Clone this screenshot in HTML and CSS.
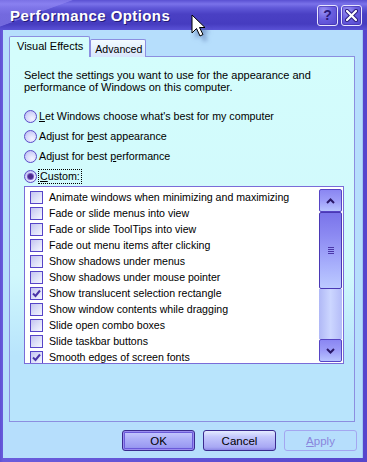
FILE: index.html
```html
<!DOCTYPE html>
<html lang="en">
<head>
    <meta charset="UTF-8">
    <title>Performance Options</title>
    <link rel="stylesheet" href="styles.css">
</head>
<body>
    <div class="window">
        <div class="titlebar">
            <span class="title">Performance Options</span>
            <div class="caption-btns">
                <span class="cap-btn help">?</span>
                <span class="cap-btn close">
                    <svg width="13" height="13" viewBox="0 0 13 13">
                        <path d="M2 2 L11 11 M11 2 L2 11" stroke="#2a1c7c" stroke-width="4.2" stroke-linecap="round"/>
                        <path d="M2 2 L11 11 M11 2 L2 11" stroke="#fff" stroke-width="2.2" stroke-linecap="round"/>
                    </svg>
                </span>
            </div>
        </div>

        <div class="frame">
            <div class="tabs">
                <div class="tab active">Visual Effects</div>
                <div class="tab">Advanced</div>
            </div>

            <div class="panel">
                <p class="intro">Select the settings you want to use for the appearance and<br>performance of Windows on this computer.</p>

                <div class="radios">
                    <div class="radio"><span class="dot"></span><span><u>L</u>et Windows choose what's best for my computer</span></div>
                    <div class="radio"><span class="dot"></span><span>Adjust for <u>b</u>est appearance</span></div>
                    <div class="radio"><span class="dot"></span><span>Adjust for best <u>p</u>erformance</span></div>
                    <div class="radio"><span class="dot on"></span><span class="focus"><u>C</u>ustom:</span></div>
                </div>

                <div class="list">
                    <ul class="items">
                        <li><span class="box"></span>Animate windows when minimizing and maximizing</li>
                        <li><span class="box"></span>Fade or slide menus into view</li>
                        <li><span class="box"></span>Fade or slide ToolTips into view</li>
                        <li><span class="box"></span>Fade out menu items after clicking</li>
                        <li><span class="box"></span>Show shadows under menus</li>
                        <li><span class="box"></span>Show shadows under mouse pointer</li>
                        <li><span class="box checked"><svg width="11" height="11" viewBox="0 0 11 11"><path d="M2 5.5 L4.5 8 L9 2.5" fill="none" stroke="#4a34a8" stroke-width="2"/></svg></span>Show translucent selection rectangle</li>
                        <li><span class="box"></span>Show window contents while dragging</li>
                        <li><span class="box"></span>Slide open combo boxes</li>
                        <li><span class="box"></span>Slide taskbar buttons</li>
                        <li><span class="box checked"><svg width="11" height="11" viewBox="0 0 11 11"><path d="M2 5.5 L4.5 8 L9 2.5" fill="none" stroke="#4a34a8" stroke-width="2"/></svg></span>Smooth edges of screen fonts</li>
                    </ul>
                    <div class="scrollbar">
                        <div class="sb-btn">
                            <svg width="9" height="6" viewBox="0 0 9 6"><path d="M1 5 L4.5 1.5 L8 5" fill="none" stroke="#2a1868" stroke-width="2"/></svg>
                        </div>
                        <div class="thumb">
                            <span class="grip"></span>
                        </div>
                        <div class="track"></div>
                        <div class="sb-btn">
                            <svg width="9" height="6" viewBox="0 0 9 6"><path d="M1 1 L4.5 4.5 L8 1" fill="none" stroke="#2a1868" stroke-width="2"/></svg>
                        </div>
                    </div>
                </div>
            </div>

            <div class="actions">
                <button class="btn default">OK</button>
                <button class="btn">Cancel</button>
                <button class="btn disabled"><u>A</u>pply</button>
            </div>
        </div>

        <!-- mouse pointer over the title bar -->
        <svg class="cursor" width="22" height="28" viewBox="0 0 22 28">
            <path d="M1 1 L1 19 L5.5 14.5 L9 22 L12 20.5 L8.5 13.5 L14 13.5 Z" fill="#fff" stroke="#000" stroke-width="1"/>
        </svg>
    </div>
</body>
</html>
```

FILE: styles.css
```css
/* Global */
body {
    margin: 0;
    font-family: "Liberation Sans", Arial, sans-serif;
    font-size: 11px;
    color: #000;
}

.window {
    position: relative;
    width: 367px;
    height: 462px;
    display: flex;
    flex-direction: column;
    overflow: hidden;
    background: linear-gradient(90deg, #5e50d4 0, #6a5cdc 3px, #5646cc 100%);
}

/* Title bar */
.titlebar {
    flex: none;
    height: 30px;
    display: flex;
    align-items: center;
    justify-content: space-between;
    padding: 0 5px 0 10px;
    background:
        linear-gradient(160deg, rgba(150, 140, 245, 0.55) 0, rgba(150, 140, 245, 0.55) 16%, transparent 16.5%),
        linear-gradient(#5a50d2 0, #7a72ea 4px, #6058d8 8px, #4a40c4 14px, #463cc0 24px, #5a52d6 30px);
}

.title {
    color: #fff;
    font-weight: bold;
    font-size: 15px;
    letter-spacing: 0.4px;
    text-shadow: 1px 1px 0 #241a78;
}

.caption-btns {
    display: flex;
    gap: 3px;
}

.cap-btn {
    width: 19px;
    height: 19px;
    border: 1px solid #e8e6ff;
    border-radius: 3px;
    display: flex;
    align-items: center;
    justify-content: center;
    background: radial-gradient(circle at 30% 25%, #9a92f4 0, #6a5ee0 45%, #5246cc 100%);
    box-shadow: inset 0 0 0 1px rgba(60, 40, 160, 0.5);
}

.cap-btn.help {
    color: #2a1a7a;
    font-weight: bold;
    font-size: 14px;
}

/* Dialog body */
.frame {
    flex: 1;
    margin: 0 4px 4px 3px;
    padding: 6px 8px 0 6px;
    background: #b6defc;
    display: flex;
    flex-direction: column;
    box-shadow: inset -1px 0 0 #a0c8f4;
}

.tabs {
    display: flex;
    align-items: flex-end;
    height: 21px;
    margin-bottom: -1px;
    position: relative;
    z-index: 1;
}

.tab {
    box-sizing: border-box;
    height: 18px;
    padding: 3px 3px 0 4px;
    border: 1px solid #8c8ee0;
    border-bottom: none;
    border-radius: 2px 2px 0 0;
    background: linear-gradient(#f2faff, #d6e6fc);
    font-size: 10.6px;
}

.tab.active {
    height: 21px;
    padding: 3px 6px 0 7px;
    font-size: 11px;
    background: #d4fdfc;
}

.panel {
    height: 366px;
    box-sizing: border-box;
    border: 1px solid #8c8ee0;
    padding: 12px 10px 0 14px;
    background: linear-gradient(#d4fdfc 0, #d0f8fc 60%, #b8e4fc 82%, #b8e4fc 100%);
}

.intro {
    margin: 0;
    line-height: 12px;
    font-size: 11px;
}

/* Radio options */
.radios {
    margin-top: 13px;
}

.radio {
    height: 20px;
    display: flex;
    align-items: center;
    gap: 2px;
    font-size: 10.7px;
}

.dot {
    width: 11px;
    height: 11px;
    border: 1px solid #5a4ac8;
    border-radius: 50%;
    background: radial-gradient(circle at 65% 70%, #f4f4ff 0, #d4d6fa 55%, #b0b0ee 100%);
    display: flex;
    align-items: center;
    justify-content: center;
}

.dot.on::after {
    content: "";
    width: 5px;
    height: 5px;
    border-radius: 50%;
    background: #4a2a8c;
    box-shadow: 0 0 0 1px #7a5ac0;
}

.focus {
    outline: 1px dotted #000;
    outline-offset: 0;
    padding: 0 1px;
    line-height: 13px;
}

/* Check list */
.list {
    height: 178px;
    box-sizing: border-box;
    border: 1px solid #7a6cd8;
    background: #fff;
    display: flex;
    overflow: hidden;
}

.items {
    flex: 1;
    list-style: none;
    margin: 0;
    padding: 2px 0 0;
}

.items li {
    height: 16px;
    display: flex;
    align-items: center;
    font-size: 10.6px;
    white-space: nowrap;
}

.box {
    flex: none;
    width: 11px;
    height: 11px;
    margin: 0 6px 0 5px;
    border: 1px solid #5644c8;
    background: linear-gradient(135deg, #c4c4f0 0, #dcdff8 50%, #f4f6ff 100%);
    display: flex;
    align-items: center;
    justify-content: center;
}

/* Scrollbar */
.scrollbar {
    flex: none;
    width: 23px;
    padding: 2px 1px 1px 0;
    display: flex;
    flex-direction: column;
}

.sb-btn {
    height: 21px;
    border: 1px solid #5644c4;
    border-radius: 2px;
    background: linear-gradient(#8a86f2 0, #9c9cf8 50%, #b8c4ff 100%);
    display: flex;
    align-items: center;
    justify-content: center;
}

.thumb {
    height: 75px;
    border: 1px solid #4a38b4;
    border-radius: 2px;
    background: linear-gradient(#7a74ea 0, #8c8af2 30%, #a8b0fc 70%, #bccaff 100%);
    display: flex;
    align-items: center;
    justify-content: center;
}

.grip {
    width: 6px;
    height: 7px;
    background: repeating-linear-gradient(#4a36a8 0, #4a36a8 1px, transparent 1px, transparent 2px);
}

.track {
    flex: 1;
    background: linear-gradient(90deg, #b0b8f6, #ccd6ff 50%, #b4bcf8);
}

/* Buttons */
.actions {
    display: flex;
    justify-content: flex-end;
    gap: 8px;
    margin: 8px -2px 0 0;
}

.btn {
    width: 73px;
    height: 21px;
    padding: 0;
    border: 1px solid #3a2a8e;
    border-radius: 3px;
    font-family: "Liberation Sans", Arial, sans-serif;
    font-size: 11.5px;
    color: #000;
    background: linear-gradient(#e4ecff 0, #c4c8fc 30%, #a8a8f4 85%, #8c88e6 100%);
}

.btn.default {
    box-shadow: inset 0 0 0 1px #9a8cf0, inset 0 0 0 2px #6a5ad8;
    background: linear-gradient(#c8ccff 0, #aeb0f8 40%, #9a9af2 85%, #8480e0 100%);
}

.btn.disabled {
    border-color: #a4a6f0;
    background: transparent;
    color: #8a86dc;
}

/* Pointer */
.cursor {
    position: absolute;
    left: 191px;
    top: 14px;
    filter: drop-shadow(4px 5px 2px rgba(80, 110, 170, 0.55));
}
```
